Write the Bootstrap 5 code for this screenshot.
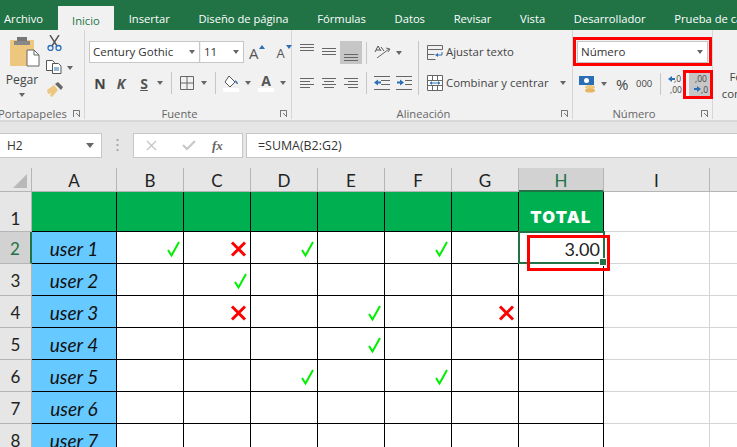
<!DOCTYPE html>
<html lang="es"><head><meta charset="utf-8"><title>Excel</title>
<link href="https://cdn.jsdelivr.net/npm/bootstrap@5.3.0/dist/css/bootstrap.min.css" rel="stylesheet">
<style>
html,body{height:447px;overflow:hidden;background:#e6e6e6;}
body{font-family:"Open Sans","Liberation Sans",sans-serif;font-size:11.4px;color:#444;position:relative;width:737px;}
svg{display:block;flex:none;}
.tabbar{height:30px;background:#217346;color:#fff;padding-left:4px;white-space:nowrap;overflow:hidden;font-size:11.2px;}
.tabitem{margin-right:28.7px;line-height:17px;padding-top:10px;}
.tabitem.first{margin-right:15px;}
.tabitem.on{background:#f1f1f1;color:#217346;padding:6px 14px 0;margin:6px 15px 0 0;line-height:18px;}
.ribbon{height:92px;background:#f1f1f1;border-bottom:2px solid #d8d8d8;overflow:hidden;}
.rgroup{flex:none;height:89px;position:relative;border-right:1px solid #d6d6d6;margin-bottom:2px;}
.rlabel{position:absolute;left:0;right:17px;top:76px;text-align:center;color:#666;font-size:11.2px;line-height:16px;white-space:nowrap;}
.launch{position:absolute;right:4px;top:80px;}
.rrow{position:absolute;display:flex;align-items:center;}
.combo{background:#fff;border:1px solid #c6c6c6;height:22px;padding:0 4px;font-size:11.5px;color:#333;line-height:20px;}
.caret{width:0;height:0;border:3px solid transparent;border-top:4px solid #666;border-bottom:0;flex:none;}
.sep{width:1px;height:22px;background:#c6c6c6;flex:none;}
.activebox{background:#c6c6c6;display:flex;align-items:center;justify-content:center;flex:none;}
.fbar{height:46px;padding:11px 0 10px;background:#e6e6e6;}
.fbox{background:#fff;border:1px solid #c6c6c6;height:25px;line-height:23px;color:#333;}
.sheet{display:grid;grid-template-columns:32px 85px repeat(6,67px) 85px 106px 28px;grid-template-rows:24px 40px repeat(7,32px);position:relative;font-family:"Lato","Open Sans",sans-serif;}
.hcol,.hrow{background:#e6e6e6;color:#222;display:flex;align-items:center;justify-content:center;font-size:17px;border-right:1px solid #b5b5b5;border-bottom:1px solid #b5b5b5;}
.hcol{padding-top:3px;}
.hrow{padding-top:3px;}
.hsel{background:#d2d2d2;color:#217346;}
.hcol.hsel{border-bottom:2px solid #217346;}
.hrow.hsel{border-right:2px solid #217346;}
.corner{position:relative;background:#e6e6e6;border-right:1px solid #b5b5b5;border-bottom:1px solid #b5b5b5;}
.corner i{position:absolute;right:4px;bottom:3px;width:0;height:0;border-style:solid;border-width:0 0 14px 14px;border-color:transparent transparent #b9b9b9 transparent;}
.cellx{background:#fff;border-right:1px solid #000;border-bottom:1px solid #000;display:flex;align-items:center;justify-content:flex-end;padding:3px 3px 0 0;}
.gr{background:#00b050;}
.bl{background:#66c9ff;justify-content:center;padding:3px 0 0;font-style:italic;font-size:19px;color:#111;}
.plain{background:#fff;border-right:1px solid #d4d4d4;border-bottom:1px solid #d4d4d4;}
.totalx{color:#fff;font-family:"Inter",sans-serif;font-weight:900;font-size:16.5px;letter-spacing:1.2px;align-items:flex-end;justify-content:center;padding:0 0 1px;}
.valx{font-size:18px;font-weight:400;color:#222;padding-right:3px;}
.selbox{position:absolute;left:518px;top:63px;width:87px;height:33px;border:2px solid #217346;pointer-events:none;}
.selbox i{position:absolute;right:-4px;bottom:-4px;width:6px;height:6px;background:#217346;border:1px solid #fff;box-sizing:content-box;}
.redbox{position:absolute;border:3px solid #f00;pointer-events:none;}
</style></head>
<body>
<div class="tabbar d-flex">
<div class="tabitem first">Archivo</div><div class="tabitem on">Inicio</div><div class="tabitem">Insertar</div><div class="tabitem">Diseño de página</div><div class="tabitem">Fórmulas</div><div class="tabitem">Datos</div><div class="tabitem">Revisar</div><div class="tabitem">Vista</div><div class="tabitem">Desarrollador</div><div class="tabitem">Prueba de ca</div>
</div>
<div class="ribbon d-flex">
 <!-- Portapapeles -->
 <div class="rgroup" style="width:85px">
  <svg class="rrow" style="left:10px;top:7px" width="30" height="30" viewBox="0 0 30 30"><rect x="0" y="3" width="24" height="26" rx="1" fill="#eec77f"/><rect x="7" y="0" width="10" height="6" fill="#777"/><rect x="4" y="4" width="16" height="4" fill="#888"/><path d="M17 13h7l5 5v11H17z" fill="#fff" stroke="#666"/><path d="M24 13v5h5" fill="none" stroke="#666"/></svg>
  <div class="rrow" style="left:7px;top:41px;font-size:12.2px;width:30px;justify-content:center">Pegar</div>
  <div class="caret rrow" style="left:19px;top:63px"></div>
  <svg class="rrow" style="left:47px;top:5px" width="15" height="16" viewBox="0 0 15 16"><path d="M3 0l7 11M12 0L5 11" stroke="#555" stroke-width="1.4" fill="none"/><circle cx="3.5" cy="13" r="2.5" fill="none" stroke="#2a6fb5" stroke-width="1.3"/><circle cx="11.5" cy="13" r="2.5" fill="none" stroke="#2a6fb5" stroke-width="1.3"/></svg>
  <svg class="rrow" style="left:46px;top:30px" width="16" height="14" viewBox="0 0 16 14"><path d="M.5.5h6l2 2v8H.5z" fill="#fff" stroke="#555"/><path d="M6.5 3.5h6l2.5 2.5v7.5H6.5z" fill="#fff" stroke="#555"/><path d="M8 8h5M8 10h5" stroke="#2a6fb5"/></svg>
  <div class="caret rrow" style="left:67px;top:36px"></div>
  <svg class="rrow" style="left:46px;top:52px" width="17" height="16" viewBox="0 0 17 16"><path d="M1 8l7-5 4 5-6 7-2-1 1-3-3 1z" fill="#eec77f"/><path d="M9 2l3-2 5 5-2 3z" fill="#666"/></svg>
  <div class="rlabel" style="left:-2px;right:auto;width:68px;">Portapapeles</div>
  <svg class="launch" width="7" height="7" viewBox="0 0 7 7"><path d="M0 .5h6.5V7M.5 0v7M3 3l3.5 3.5" fill="none" stroke="#777"/></svg>
 </div>
 <!-- Fuente -->
 <div class="rgroup" style="width:207px">
  <div class="rrow" style="left:4px;top:11px">
   <div class="combo d-flex align-items-center justify-content-between" style="width:111px;padding-left:3px"><span>Century Gothic</span><i class="caret"></i></div>
   <div class="combo d-flex align-items-center justify-content-between" style="width:44px;margin-left:0;border-left:0;box-shadow:inset 1px 0 0 #f1f1f1"><span>11</span><i class="caret"></i></div>
  </div>
  <div class="rrow" style="left:164px;top:12px;font-size:15px;color:#555;">
   <span>A</span><i class="caret" style="transform:rotate(180deg);border-top-color:#2a6fb5;margin:-12px 0 0 0"></i>
   <span style="font-size:13px;margin-left:12px">A</span><i class="caret" style="border-top-color:#2a6fb5;margin:-12px 0 0 1px"></i>
  </div>
  <div class="rrow" style="left:0;top:42px;height:22px;color:#444;font-weight:700;font-size:14px">
   <span style="margin-left:5px;width:20px;text-align:center;color:#444">N</span>
   <span style="margin-left:1px;width:20px;text-align:center;font-style:italic;color:#555">K</span>
   <span style="margin-left:3px;width:20px;text-align:center;text-decoration:underline;color:#555">S</span>
   <i class="caret" style="margin-left:3px"></i>
   <i class="sep" style="margin-left:8px"></i>
   <svg style="margin-left:8px" width="14" height="14" viewBox="0 0 14 14"><path d="M.5.5h13v13H.5zM7 .5v13M.5 7h13" fill="none" stroke="#666"/></svg>
   <i class="caret" style="margin-left:7px"></i>
   <i class="sep" style="margin-left:8px"></i>
   <svg style="margin-left:7px" width="17" height="17" viewBox="0 0 17 17"><path d="M6 1l6 6-5 5-5-5z" fill="#fff" stroke="#555"/><path d="M12 5c2 1 3 3 3 4-2 0-3-2-3-4z" fill="#2a6fb5"/><rect y="13" width="16" height="4" fill="#fff"/></svg>
   <i class="caret" style="margin-left:5px"></i>
   <div style="margin-left:7px;width:16px;text-align:center;font-size:14px;line-height:14px;border-bottom:4px solid #fff;color:#555">A</div>
   <i class="caret" style="margin-left:6px"></i>
  </div>
  <div class="rlabel">Fuente</div>
  <svg class="launch" width="7" height="7" viewBox="0 0 7 7"><path d="M0 .5h6.5V7M.5 0v7M3 3l3.5 3.5" fill="none" stroke="#777"/></svg>
 </div>
 <!-- Alineacion -->
 <div class="rgroup" style="width:281px">
  <div class="rrow" style="left:0;top:11px;height:23px">
   <svg style="margin-left:8px;margin-top:-10px" width="14" height="7" viewBox="0 0 14 7"><path d="M0 .5h14M0 3.5h14M0 6.5h14" stroke="#666"/></svg>
   <svg style="margin-left:8px;margin-top:-2px" width="14" height="7" viewBox="0 0 14 7"><path d="M0 .5h14M0 3.5h14M0 6.5h14" stroke="#666"/></svg>
   <div class="activebox" style="width:22px;height:23px;margin-left:4px;padding-top:9px"><svg width="14" height="7" viewBox="0 0 14 7"><path d="M0 .5h14M0 3.5h14M0 6.5h14" stroke="#666"/></svg></div>
   <i class="sep" style="margin-left:4px"></i>
   <svg style="margin-left:7px" width="17" height="17" viewBox="0 0 17 17"><path d="M3 14L15 5M12 4l4 1-2 3" fill="none" stroke="#666"/><path d="M1 8l3-6 3 5M2 6h4M7 3l3 4" fill="none" stroke="#555"/></svg>
   <i class="caret" style="margin-left:5px"></i>
  </div>
  <div class="rrow" style="left:0;top:42px;height:22px">
   <svg style="margin-left:8px" width="14" height="10" viewBox="0 0 14 10"><path d="M0 .5h14M0 3.5h10M0 6.5h14M0 9.5h10" stroke="#666"/></svg>
   <svg style="margin-left:8px" width="14" height="10" viewBox="0 0 14 10"><path d="M0 .5h14M2 3.5h10M0 6.5h14M2 9.5h10" stroke="#666"/></svg>
   <svg style="margin-left:8px" width="14" height="10" viewBox="0 0 14 10"><path d="M0 .5h14M4 3.5h10M0 6.5h14M4 9.5h10" stroke="#666"/></svg>
   <i class="sep" style="margin-left:8px"></i>
   <svg style="margin-left:7px" width="16" height="14" viewBox="0 0 16 14"><path d="M0 .5h16M7 4.5h9M7 8.5h9M0 13.5h16" stroke="#666"/><path d="M0 6.5l4-3v2h3v2H4v2z" fill="#2a6fb5"/></svg>
   <svg style="margin-left:6px" width="16" height="14" viewBox="0 0 16 14"><path d="M0 .5h16M9 4.5h7M9 8.5h7M0 13.5h16" stroke="#666"/><path d="M8 6.5l-4-3v2H1v2h3v2z" fill="#2a6fb5"/></svg>
   <i class="sep" style="margin-left:6px"></i>
  </div>
  <div class="rrow" style="left:135px;top:11px;height:22px;font-size:11.4px">
   <svg width="16" height="16" viewBox="0 0 16 16"><path d="M.5 1.5h15v4H.5zM.5 5.5v10h8M.5 10.5h7" fill="none" stroke="#666"/><path d="M15 8v3H10" fill="none" stroke="#2a6fb5"/><path d="M8 11l3-2v4z" fill="#2a6fb5"/></svg>
   <span style="margin-left:3px">Ajustar texto</span>
  </div>
  <div class="rrow" style="left:135px;top:42px;height:22px;font-size:11.4px">
   <svg width="16" height="16" viewBox="0 0 16 16"><path d="M.5.5h15v15H.5zM.5 5.5h15M.5 10.5h15M5.5.5v5M10.5.5v5M5.5 10.5v5M10.5 10.5v5" fill="#fff" stroke="#666"/><path d="M3 8h10" stroke="#2a6fb5"/><path d="M3 8l2-2v4zM13 8l-2-2v4z" fill="#2a6fb5"/></svg>
   <span style="margin-left:3px">Combinar y centrar</span>
   <i class="caret" style="margin-left:11px"></i>
  </div>
  <i class="sep rrow" style="left:126px;top:11px;height:54px"></i>
  <div class="rlabel">Alineación</div>
  <svg class="launch" width="7" height="7" viewBox="0 0 7 7"><path d="M0 .5h6.5V7M.5 0v7M3 3l3.5 3.5" fill="none" stroke="#777"/></svg>
 </div>
 <!-- Numero -->
 <div class="rgroup" style="width:140px">
  <div class="rrow" style="left:4px;top:11px"><div class="combo d-flex align-items-center justify-content-between" style="width:131px;padding-left:3px"><span>Número</span><i class="caret"></i></div></div>
  <div class="rrow" style="left:0;top:42px;height:24px">
   <svg style="margin-left:6px" width="17" height="17" viewBox="0 0 17 17"><rect width="15" height="9" fill="#2a6fb5"/><circle cx="7.5" cy="4.5" r="2.5" fill="#fff"/><ellipse cx="11" cy="11" rx="5" ry="2" fill="#eec77f"/><ellipse cx="11" cy="14.5" rx="5" ry="2" fill="#e5b560"/></svg>
   <i class="caret" style="margin-left:5px"></i>
   <span style="margin-left:9px;font-size:15px;color:#444;width:15px">%</span>
   <span style="margin-left:5px;font-size:9.5px;color:#444">000</span>
   <i class="sep" style="margin-left:8px"></i>
   <svg style="margin-left:7px" width="15" height="21" viewBox="0 0 15 21"><text x="6" y="8" font-size="8.5" fill="#444">,0</text><text x="2" y="19" font-size="8.5" fill="#444">,00</text><path d="M0 5l4-3v2h3v2H4v2z" fill="#2a6fb5"/></svg>
   <div class="activebox" style="width:22px;height:23px;margin-left:6px"><svg width="15" height="21" viewBox="0 0 15 21"><text x="2" y="8" font-size="8.5" fill="#444">,00</text><text x="8" y="19" font-size="8.5" fill="#444">,0</text><path d="M8 15l-4-3v2H1v2h3v2z" fill="#2a6fb5"/></svg></div>
  </div>
  <div class="rlabel">Número</div>
  <svg class="launch" width="7" height="7" viewBox="0 0 7 7"><path d="M0 .5h6.5V7M.5 0v7M3 3l3.5 3.5" fill="none" stroke="#777"/></svg>
 </div>
 <div class="flex-shrink-0 text-center" style="width:78px;padding-top:38px;line-height:17px;font-size:11.4px">Formato<br>condicional</div>
</div>
<div class="fbar d-flex">
 <div class="fbox d-flex align-items-center justify-content-between" style="width:102px;padding:0 7px;border-left:0;font-size:12px"><span>H2</span><i class="caret" style="border-width:4px;border-top-width:5px;border-bottom:0"></i></div>
 <svg style="margin:5px 0 0 14px" width="3" height="14" viewBox="0 0 3 14"><path d="M1.5 1v2M1.5 6v2M1.5 11v2" stroke="#aaa" stroke-width="2"/></svg>
 <div class="fbox d-flex align-items-center" style="width:110px;margin-left:14px">
  <svg style="margin-left:12px" width="11" height="11" viewBox="0 0 11 11"><path d="M1 1l9 9M10 1l-9 9" stroke="#c6c6c6" stroke-width="1.4"/></svg>
  <svg style="margin-left:25px" width="14" height="11" viewBox="0 0 14 11"><path d="M1 5l4 4 8-8" fill="none" stroke="#c6c6c6" stroke-width="2"/></svg>
  <span style="margin-left:16px;font-family:'Liberation Serif',serif;font-style:italic;font-weight:700;color:#666;font-size:13px">fx</span>
 </div>
 <div class="fbox flex-grow-1" style="margin-left:3px;padding-left:11px;border-right:0;font-size:12.4px">=SUMA(B2:G2)</div>
</div>
<div class="sheet">
 <div class="corner"><i></i></div><div class="hcol">A</div><div class="hcol">B</div><div class="hcol">C</div><div class="hcol">D</div><div class="hcol">E</div><div class="hcol">F</div><div class="hcol">G</div><div class="hcol hsel">H</div><div class="hcol">I</div><div class="hcol" style="border-right:0"></div>

 <div class="hrow" style="align-items:flex-end">1</div><div class="cellx gr"></div><div class="cellx gr"></div><div class="cellx gr"></div><div class="cellx gr"></div><div class="cellx gr"></div><div class="cellx gr"></div><div class="cellx gr"></div><div class="cellx gr totalx">TOTAL</div><div class="plain"></div><div class="plain"></div>

 <div class="hrow hsel">2</div><div class="cellx bl">user 1</div>
 <div class="cellx"><svg width="13" height="16" viewBox="0 0 13 16"><use href="#ck"/></svg></div>
 <div class="cellx"><svg width="17" height="16" viewBox="0 0 17 16"><use href="#xx"/></svg></div>
 <div class="cellx"><svg width="13" height="16" viewBox="0 0 13 16"><use href="#ck"/></svg></div>
 <div class="cellx"></div>
 <div class="cellx"><svg width="13" height="16" viewBox="0 0 13 16"><use href="#ck"/></svg></div>
 <div class="cellx"></div>
 <div class="cellx valx">3.00</div><div class="plain"></div><div class="plain"></div>

 <div class="hrow">3</div><div class="cellx bl">user 2</div><div class="cellx"></div>
 <div class="cellx"><svg width="13" height="16" viewBox="0 0 13 16"><use href="#ck"/></svg></div>
 <div class="cellx"></div><div class="cellx"></div><div class="cellx"></div><div class="cellx"></div><div class="cellx"></div><div class="plain"></div><div class="plain"></div>

 <div class="hrow">4</div><div class="cellx bl">user 3</div><div class="cellx"></div>
 <div class="cellx"><svg width="17" height="16" viewBox="0 0 17 16"><use href="#xx"/></svg></div>
 <div class="cellx"></div>
 <div class="cellx"><svg width="13" height="16" viewBox="0 0 13 16"><use href="#ck"/></svg></div>
 <div class="cellx"></div>
 <div class="cellx"><svg width="17" height="16" viewBox="0 0 17 16"><use href="#xx"/></svg></div>
 <div class="cellx"></div><div class="plain"></div><div class="plain"></div>

 <div class="hrow">5</div><div class="cellx bl">user 4</div><div class="cellx"></div><div class="cellx"></div><div class="cellx"></div>
 <div class="cellx"><svg width="13" height="16" viewBox="0 0 13 16"><use href="#ck"/></svg></div>
 <div class="cellx"></div><div class="cellx"></div><div class="cellx"></div><div class="plain"></div><div class="plain"></div>

 <div class="hrow">6</div><div class="cellx bl">user 5</div><div class="cellx"></div><div class="cellx"></div>
 <div class="cellx"><svg width="13" height="16" viewBox="0 0 13 16"><use href="#ck"/></svg></div>
 <div class="cellx"></div>
 <div class="cellx"><svg width="13" height="16" viewBox="0 0 13 16"><use href="#ck"/></svg></div>
 <div class="cellx"></div><div class="cellx"></div><div class="plain"></div><div class="plain"></div>

 <div class="hrow">7</div><div class="cellx bl">user 6</div><div class="cellx"></div><div class="cellx"></div><div class="cellx"></div><div class="cellx"></div><div class="cellx"></div><div class="cellx"></div><div class="cellx"></div><div class="plain"></div><div class="plain"></div>

 <div class="hrow">8</div><div class="cellx bl">user 7</div><div class="cellx"></div><div class="cellx"></div><div class="cellx"></div><div class="cellx"></div><div class="cellx"></div><div class="cellx"></div><div class="cellx"></div><div class="plain"></div><div class="plain"></div>
 <div class="selbox"><i></i></div>
</div>
<div class="redbox" style="left:573px;top:37px;width:139px;height:29px"></div>
<div class="redbox" style="left:683px;top:70px;width:30px;height:29px"></div>
<div class="redbox" style="left:527px;top:235px;width:83px;height:36px"></div>
<svg width="0" height="0" style="position:absolute"><defs>
<g id="ck"><path d="M1 9l3.5 5.5L12 1" fill="none" stroke="#00ee00" stroke-width="2"/></g>
<g id="xx"><path d="M2 1.5l13 13M15 1.5l-13 13" fill="none" stroke="#f00" stroke-width="3"/></g>
</defs></svg>
</body></html>
